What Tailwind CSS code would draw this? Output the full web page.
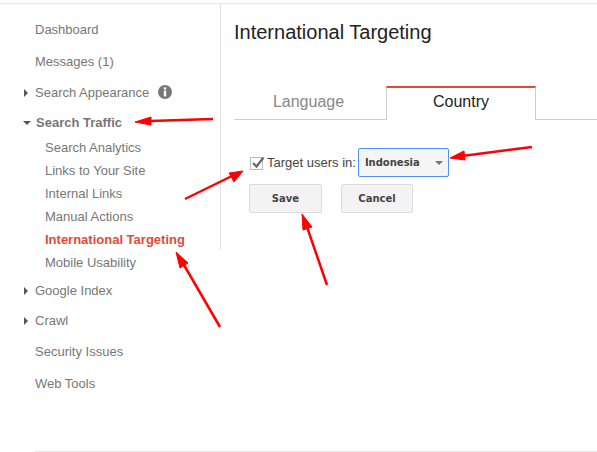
<!DOCTYPE html>
<html lang="en">
  <head>
    <meta charset="UTF-8" />
    <script src="https://cdn.jsdelivr.net/npm/@tailwindcss/browser@4"></script>
    <title>International Targeting</title>
  </head>
  <body class="relative w-[597px] h-[452px] overflow-hidden bg-white font-['Liberation_Sans',Arial,sans-serif] text-[#777]">
    <div class="h-[4px] border-b border-[#e8e8e8]"></div>

    <div class="flex h-[447px]">
      <!-- Sidebar -->
      <nav class="w-[221px] h-[246px] shrink-0 border-r border-[#e0e0e0] text-[13px] leading-[16px]">
        <ul class="pl-[35px] pt-[18px] w-[220px]">
          <li class="h-[32px]">Dashboard</li>
          <li class="h-[31px]">Messages (1)</li>
          <li class="h-[30px] relative flex items-start">
            <span class="absolute left-[-11px] top-[4px] border-y-[4px] border-l-[4px] border-y-transparent border-l-[#555]"></span>
            Search Appearance
            <svg class="ml-[9px]" width="14" height="14" viewBox="0 0 14 14">
              <circle cx="7" cy="7" r="7" fill="#777" />
              <rect x="5.8" y="2.4" width="2.4" height="2.2" fill="#fff" />
              <rect x="5.8" y="5.6" width="2.4" height="5.8" fill="#fff" />
            </svg>
          </li>
          <li class="h-[25px] relative font-bold pl-[1px]">
            <span class="absolute left-[-12px] top-[6px] border-x-[4px] border-t-[4px] border-x-transparent border-t-[#555]"></span>
            Search Traffic
          </li>
          <li class="h-[23px] pl-[10px]">Search Analytics</li>
          <li class="h-[23px] pl-[10px]">Links to Your Site</li>
          <li class="h-[23px] pl-[10px]">Internal Links</li>
          <li class="h-[23px] pl-[10px]">Manual Actions</li>
          <li class="h-[23px] pl-[10px] font-bold text-[#dd4b39] whitespace-nowrap">International Targeting</li>
          <li class="h-[28px] pl-[10px]">Mobile Usability</li>
          <li class="h-[30px] relative">
            <span class="absolute left-[-11px] top-[4px] border-y-[4px] border-l-[4px] border-y-transparent border-l-[#555]"></span>
            Google Index
          </li>
          <li class="h-[31px] relative">
            <span class="absolute left-[-11px] top-[4px] border-y-[4px] border-l-[4px] border-y-transparent border-l-[#555]"></span>
            Crawl
          </li>
          <li class="h-[32px]">Security Issues</li>
          <li class="h-[32px]">Web Tools</li>
        </ul>
      </nav>

      <!-- Main -->
      <main class="flex-1 pl-[13px]">
        <h1 class="pt-[14px] text-[20px] leading-[28px] text-[#222]">International Targeting</h1>

        <div class="flex mt-[40px] h-[33px] text-[16px] border-b border-[#ccc] box-content">
          <div class="w-[152px] pt-[6px] pr-[3px] text-center text-[#888] leading-[20px]">Language</div>
          <div class="w-[150px] h-[34px] pt-[4px] text-center text-[#222] leading-[20px] bg-white border-x border-[#ccc] border-t-2 border-t-[#dd4b39] box-border">Country</div>
        </div>

        <div class="flex items-center ml-[16px] mt-[28px] h-[29px] text-[13px] text-[#444]">
          <span class="w-[13px] h-[13px] border border-[#bbb] relative mt-[1px]">
            <svg class="absolute left-[-1px] top-[-3px]" width="16" height="15" viewBox="0 0 16 15">
              <path d="M3 8 L6.5 11.5 L13.5 2.5" fill="none" stroke="#666" stroke-width="2.2" />
            </svg>
          </span>
          <span class="ml-[4px]">Target users in:</span>
          <div class="ml-[2px] w-[91px] h-[29px] flex items-center justify-between pl-[6px] pr-[5px] bg-[#f5f5f5] border border-[#4d90fe] rounded-[2px] font-['DejaVu_Sans',sans-serif] font-bold text-[10px] text-[#444]">
            Indonesia
            <span class="border-x-[4px] border-t-[4px] border-x-transparent border-t-[#777]"></span>
          </div>
        </div>

        <div class="flex ml-[15px] mt-[7px] gap-[19px] font-bold text-[#444]">
          <button class="w-[73px] h-[29px] bg-[#f3f3f3] border border-[#dcdcdc] rounded-[2px] font-['DejaVu_Sans',sans-serif] text-[10px]">Save</button>
          <button class="w-[72px] h-[29px] bg-[#f3f3f3] border border-[#dcdcdc] rounded-[2px] font-['DejaVu_Sans',sans-serif] text-[10px]">Cancel</button>
        </div>
      </main>
    </div>

    <div class="ml-[35px] border-t border-[#e8e8e8]"></div>

    <!-- Red annotation arrows -->
    <svg class="absolute left-0 top-0 pointer-events-none" width="597" height="452" viewBox="0 0 597 452" fill="#f00" stroke="#f00">
      <path d="M213 119 L150 121" stroke-width="2.5" />
      <path d="M135 122 L151 117 L151 125 Z" stroke-width="1" />
      <path d="M532 147 L462 156" stroke-width="2.5" />
      <path d="M450 158 L464 151 L465 160 Z" stroke-width="1" />
      <path d="M185 199 L232 176" stroke-width="2.5" />
      <path d="M243 171 L234 182 L229 173 Z" stroke-width="1" />
      <path d="M327 285 L307 227" stroke-width="2.5" />
      <path d="M302 214 L312 227 L303 230 Z" stroke-width="1" />
      <path d="M220 327 L184 265" stroke-width="2.5" />
      <path d="M176 252 L188 263 L180 268 Z" stroke-width="1" />
    </svg>
  </body>
</html>
